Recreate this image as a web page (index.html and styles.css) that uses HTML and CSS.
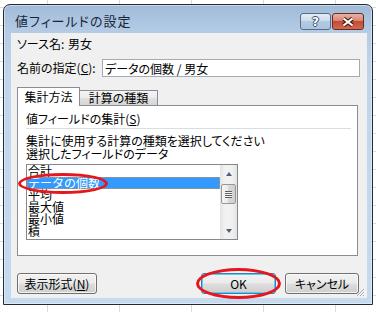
FILE: index.html
```html
<!DOCTYPE html>
<html lang="ja">

<head>
  <meta charset="UTF-8">
  <meta name="viewport" content="width=device-width, initial-scale=1.0">
  <title>値フィールドの設定</title>
  <link rel="stylesheet" href="styles.css">
</head>

<body>
  <div class="dialog">
    <div class="titlebar">
      <span class="title">値フィールドの設定</span>
      <div class="caption-buttons">
        <span class="cap-btn help">?</span>
        <span class="cap-btn close">
          <svg width="14" height="10" viewBox="0 0 14 10">
            <path d="M2.5 1.5 L11.5 8.5 M11.5 1.5 L2.5 8.5" stroke="#4a1a12" stroke-width="4.2" />
            <path d="M2.5 1.5 L11.5 8.5 M11.5 1.5 L2.5 8.5" stroke="#fff" stroke-width="2.2" />
          </svg>
        </span>
      </div>
    </div>
    <div class="frame">
      <div class="client">
        <div class="row source">
          <span class="label">ソース名:</span>
          <span>男女</span>
        </div>
        <div class="row name">
          <label class="label">名前の指定(<u>C</u>):</label>
          <input class="textbox" type="text" value="データの個数 / 男女">
        </div>
        <div class="tabs">
          <div class="tab-header">
            <span class="tab-item active">集計方法</span>
            <span class="tab-item">計算の種類</span>
          </div>
          <div class="tab-panel">
            <div class="group-label">値フィールドの集計(<u>S</u>)</div>
            <div class="group-line"></div>
            <p class="hint">集計に使用する計算の種類を選択してください<br>選択したフィールドのデータ</p>
            <div class="listbox">
              <ul class="items">
                <li>合計</li>
                <li class="selected">データの個数</li>
                <li>平均</li>
                <li>最大値</li>
                <li>最小値</li>
                <li>積</li>
              </ul>
              <div class="scrollbar">
                <span class="arrow up"></span>
                <span class="thumb"></span>
                <span class="arrow down"></span>
              </div>
              <span class="mark list-mark"></span>
            </div>
          </div>
        </div>
        <div class="buttons">
          <button class="btn format">表示形式(<u>N</u>)</button>
          <button class="btn ok">OK<span class="mark ok-mark"></span></button>
          <button class="btn cancel">キャンセル</button>
        </div>
        <svg class="grip" width="10" height="10" viewBox="0 0 10 10">
          <path d="M9 2 L2 9 M9 5 L5 9 M9 8 L8 9" stroke="#fff" stroke-width="1" />
          <path d="M8 2 L1 9 M8 5 L4 9 M8 8 L7 9" stroke="#a9a9a9" stroke-width="1" />
        </svg>
      </div>
    </div>
  </div>
</body>

</html>
```

FILE: styles.css
```css
body {
  margin: 0;
  height: 312px;
  overflow: hidden;
  font-family: "Noto Sans CJK JP", sans-serif;
  font-size: 12px;
  color: #000;
  background-color: #fff;
  background-image:
    linear-gradient(to right, #d9dcdf 1px, transparent 1px),
    linear-gradient(to bottom, #d9dcdf 1px, transparent 1px);
  background-size: 72px 18px;
  background-position: 47px 7px;
}

.dialog {
  width: 370px;
  height: 301px;
  margin: 4px 0 0 3px;
  box-sizing: border-box;
  border: 1px solid #232a33;
  border-radius: 7px 7px 0 0;
  background: linear-gradient(#a0bbd8, #b6cce6 28px, #c0d5ec 70px, #c5d9ef);
  box-shadow: inset 0 0 0 1px rgba(255, 255, 255, .45);
  display: flex;
  flex-direction: column;
}

.titlebar {
  height: 28px;
  display: flex;
  align-items: flex-start;
  padding: 0 8px 0 11px;
}

.title {
  margin-top: 9px;
  line-height: 14px;
  font-size: 13px;
  letter-spacing: 1px;
  color: #18263b;
  font-feature-settings: "palt";
}

.caption-buttons {
  margin-left: auto;
  margin-top: 8px;
  display: flex;
  gap: 1px;
}

.cap-btn {
  height: 17px;
  box-sizing: border-box;
  border: 1px solid #576d87;
  border-radius: 3px;
  display: flex;
  align-items: center;
  justify-content: center;
}

.cap-btn.help {
  width: 31px;
  background: linear-gradient(#e4edf6, #cddcec 45%, #b3cae3 50%, #a9c3df);
  font: bold 12px "DejaVu Sans", sans-serif;
  color: #fff;
  text-shadow: 1px 0 #3d4f66, -1px 0 #3d4f66, 0 1px #3d4f66, 0 -1px #3d4f66;
}

.cap-btn.close {
  width: 32px;
  border-color: #6b2b1f;
  background: linear-gradient(#eab1a5, #d98674 45%, #c44a33 50%, #cf6a52);
}

.frame {
  flex: 1;
  display: flex;
  padding: 0 5px 6px 7px;
}

.client {
  flex: 1;
  position: relative;
  background: #f0f0f0;
  padding: 5px 7px 0 6px;
  font-feature-settings: "palt";
}

.row {
  display: flex;
  align-items: center;
  line-height: 12px;
}

.source .label {
  width: 51px;
}

.name {
  margin-top: 9px;
}

.name .label {
  width: 85px;
}

.textbox {
  width: 258px;
  height: 18px;
  box-sizing: border-box;
  margin: 0;
  border: 1px solid #a4abb4;
  padding: 0 2px;
  font: 12px "Noto Sans CJK JP", sans-serif;
  font-feature-settings: "palt";
  color: #000;
  background: #fff;
}

.tabs {
  margin-top: 10px;
  margin-right: 2px;
}

.tab-header {
  display: flex;
  align-items: flex-end;
  height: 18px;
}

.tab-item {
  box-sizing: border-box;
  border: 1px solid #898c95;
  border-bottom: 0;
  line-height: 12px;
  text-align: center;
}

.tab-item.active {
  position: relative;
  z-index: 1;
  width: 63px;
  height: 19px;
  margin-bottom: -1px;
  padding-top: 3px;
  background: #fff;
}

.tab-item:not(.active) {
  width: 78px;
  height: 15px;
  padding-top: 1px;
  border-left: 0;
  background: linear-gradient(#f4f4f4, #ececec 50%, #e0e0e0 50%, #d6d6d6);
}

.tab-panel {
  height: 151px;
  box-sizing: border-box;
  border: 1px solid #898c95;
  background: #fff;
  padding: 6px 6px 0 8px;
}

.group-label {
  line-height: 13px;
}

.group-line {
  height: 1px;
  margin-top: 3px;
  background: #d5dfe5;
}

.hint {
  margin: 5px 0 0;
  line-height: 13px;
}

.listbox {
  position: relative;
  width: 212px;
  height: 76px;
  box-sizing: border-box;
  margin-top: 4px;
  border: 1px solid #828790;
  display: flex;
}

.items {
  flex: 1;
  margin: 0;
  padding: 0;
  list-style: none;
  overflow: hidden;
  font-feature-settings: normal;
}

.items li {
  height: 12px;
  line-height: 12px;
  padding-left: 1px;
  white-space: nowrap;
}

.items li.selected {
  background: #3399ff;
  color: #fff;
  outline: 1px dotted #d6913a;
  outline-offset: -1px;
}

.scrollbar {
  width: 17px;
  display: flex;
  flex-direction: column;
  align-items: center;
  background: linear-gradient(to right, #e4e4e4, #f2f2f2 30%, #f0f0f0 70%, #e4e4e4);
}

.arrow {
  height: 17px;
  width: 15px;
  display: flex;
  align-items: center;
  justify-content: center;
}

.arrow::before {
  content: "";
  border-left: 3.5px solid transparent;
  border-right: 3.5px solid transparent;
}

.arrow.up::before {
  border-bottom: 4px solid #4d6185;
}

.arrow.down {
  margin-top: auto;
}

.arrow.down::before {
  border-top: 4px solid #4d6185;
}

.thumb {
  width: 15px;
  height: 20px;
  margin-top: 2px;
  box-sizing: border-box;
  border: 1px solid #979797;
  border-radius: 2px;
  background: linear-gradient(to right, #f5f5f5, #e9e9e9 50%, #d8d8d8 50%, #d0d0d0);
  display: flex;
  align-items: center;
  justify-content: center;
}

.thumb::before {
  content: "";
  width: 7px;
  height: 7px;
  background: repeating-linear-gradient(#606060 0 1px, #f4f4f4 1px 2px);
}

.mark {
  position: absolute;
  box-sizing: border-box;
  border: 3px solid #e4161e;
  border-radius: 50%;
  pointer-events: none;
}

.list-mark {
  left: -9px;
  top: 8px;
  width: 90px;
  height: 21px;
}

.buttons {
  display: flex;
  margin-top: 17px;
}

.btn {
  position: relative;
  height: 21px;
  box-sizing: border-box;
  margin: 0;
  padding: 0;
  border: 1px solid #707070;
  border-radius: 3px;
  background: linear-gradient(#f2f2f2, #ebebeb 48%, #dddddd 52%, #cfcfcf);
  box-shadow: inset 0 0 0 1px rgba(255, 255, 255, .7);
  font: 12px "Noto Sans CJK JP", sans-serif;
  font-feature-settings: "palt";
  color: #000;
  line-height: 12px;
}

.btn.format {
  width: 80px;
}

.btn.ok {
  width: 75px;
  margin-left: auto;
  border-color: #3c7fb1;
  box-shadow: inset 0 0 0 1px #52cdf4;
}

.btn.cancel {
  width: 74px;
  margin-left: 9px;
  margin-right: 1px;
}

.ok-mark {
  left: -6px;
  top: -6px;
  width: 85px;
  height: 31px;
}

.grip {
  position: absolute;
  right: 1px;
  bottom: 1px;
}
```
